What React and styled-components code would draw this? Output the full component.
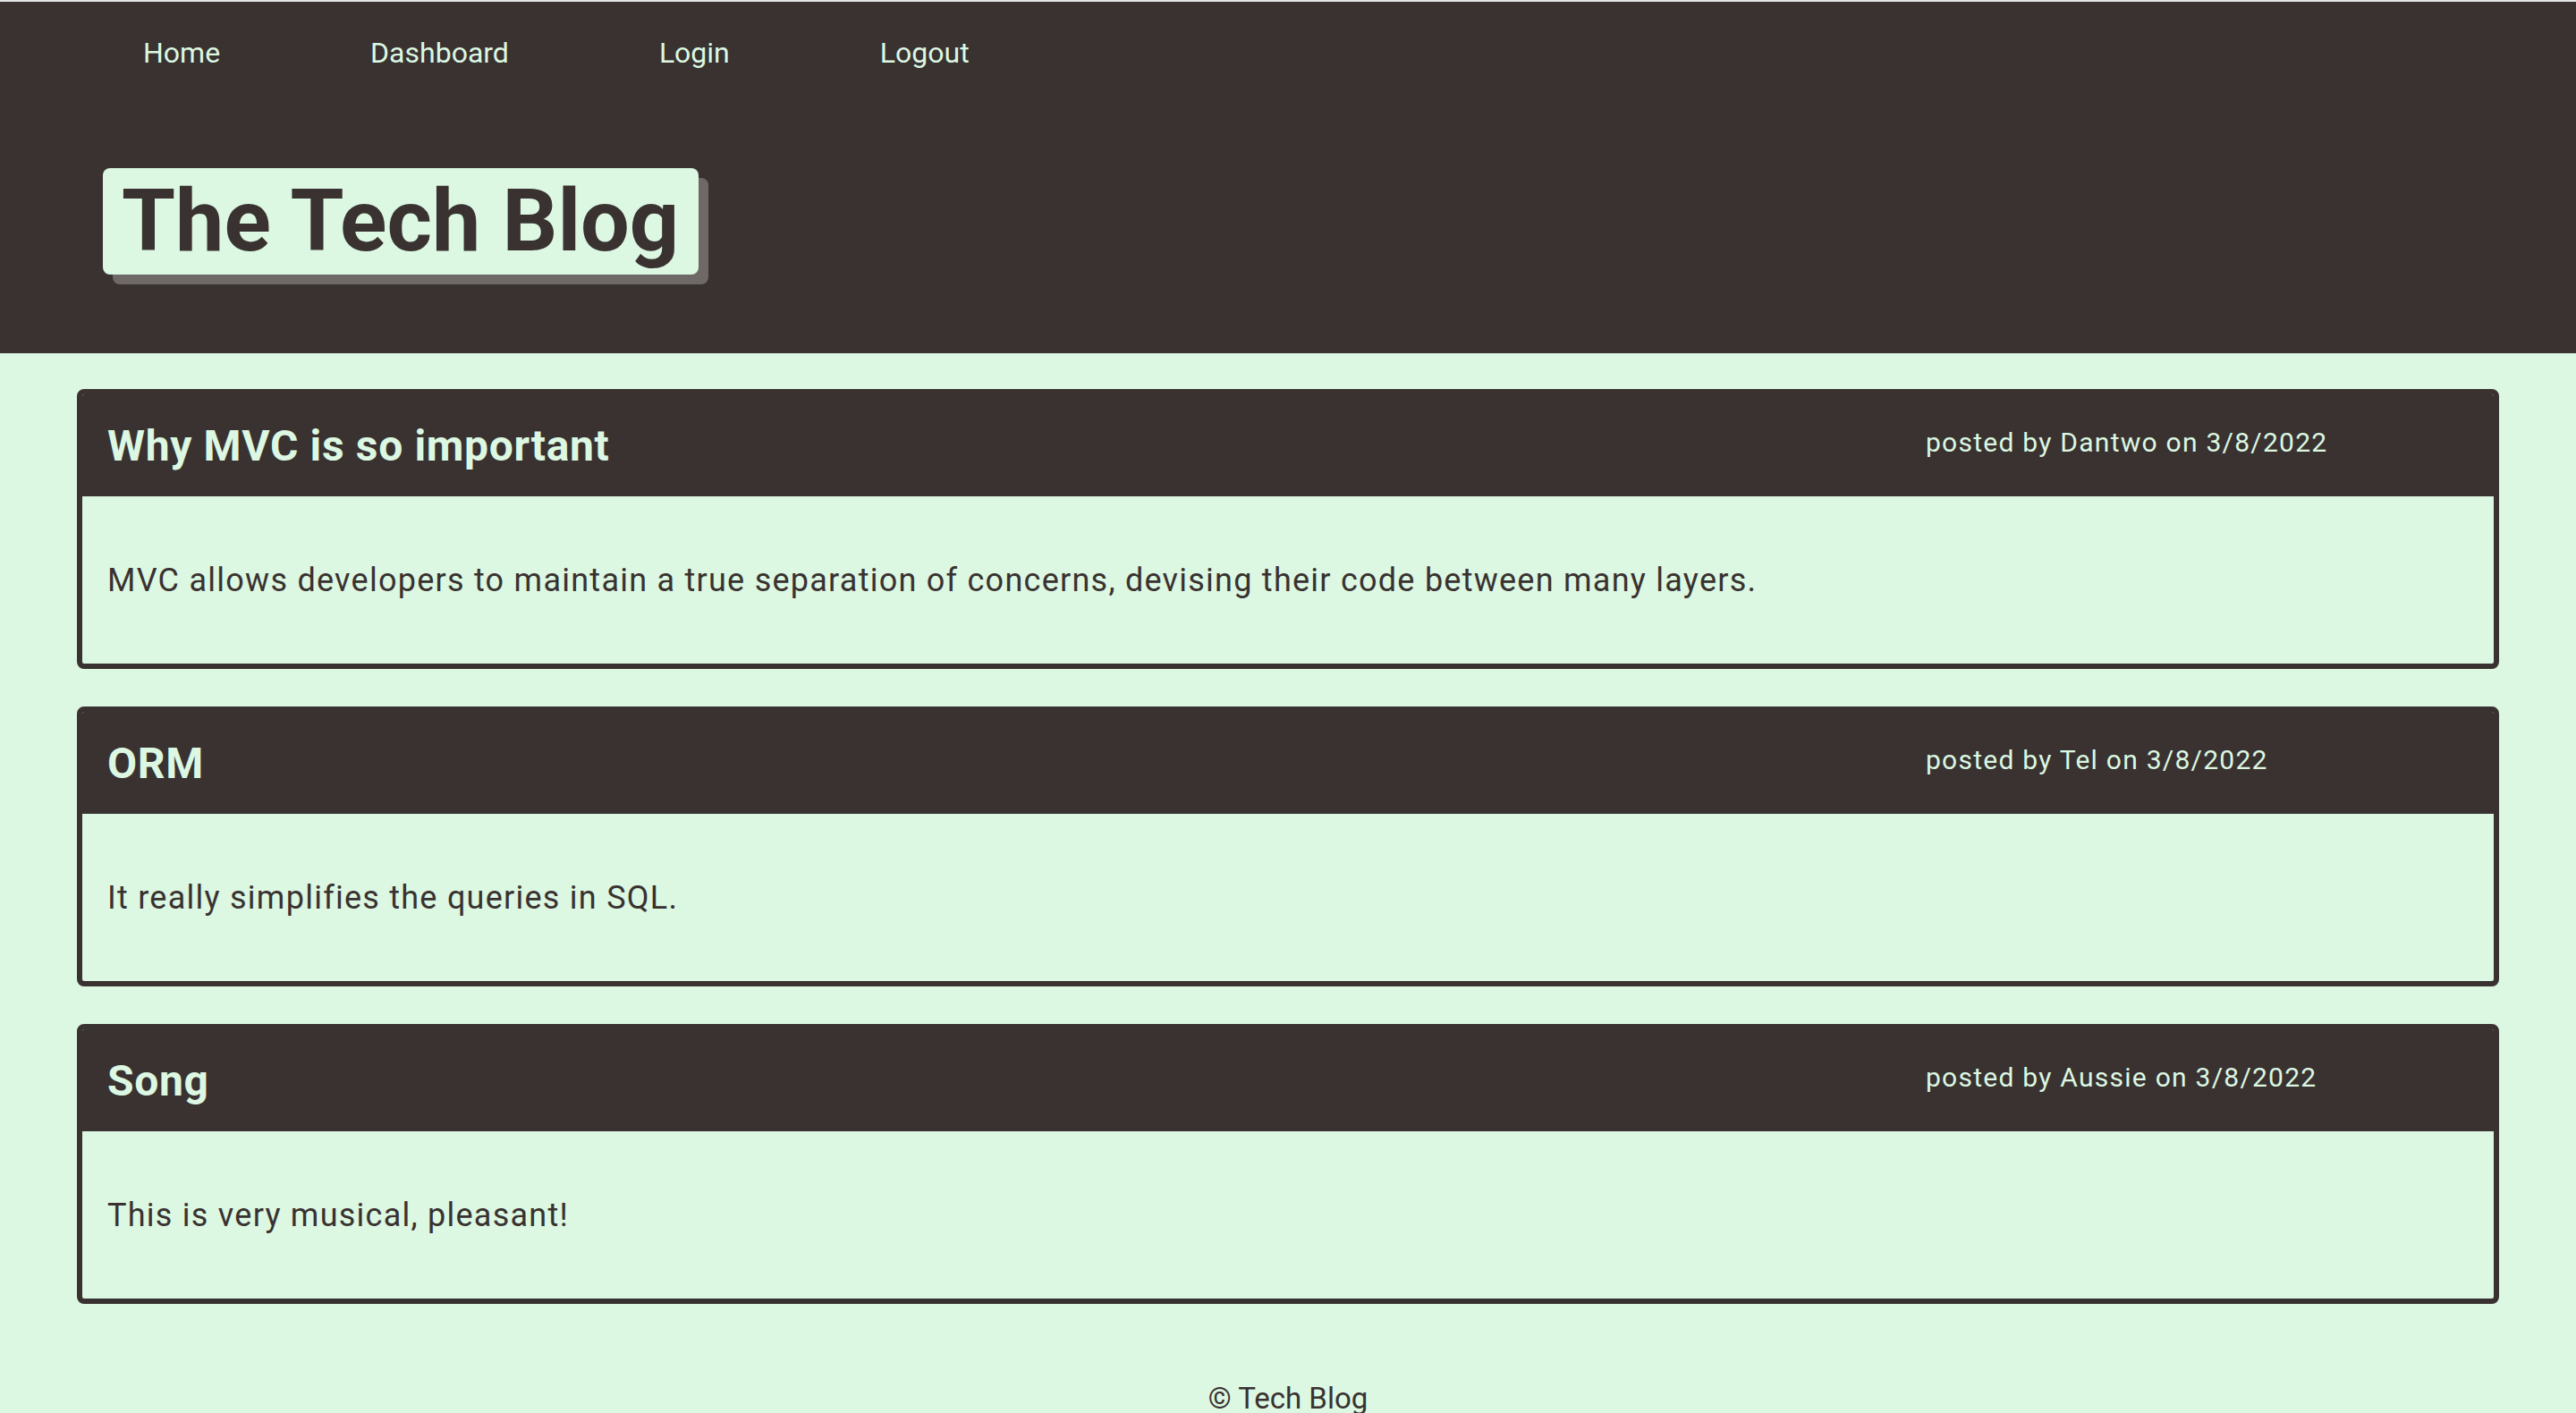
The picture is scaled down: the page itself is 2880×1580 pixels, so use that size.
import React from 'react'
import styled, { createGlobalStyle } from 'styled-components'

const posts = [
    { title: 'Why MVC is so important', author: 'Dantwo', date: '3/8/2022', body: 'MVC allows developers to maintain a true separation of concerns, devising their code between many layers.' },
    { title: 'ORM', author: 'Tel', date: '3/8/2022', body: 'It really simplifies the queries in SQL.' },
    { title: 'Song', author: 'Aussie', date: '3/8/2022', body: 'This is very musical, pleasant!' },
]

const App = () => {
    return (
        <>
            <GlobalStyle />
            <Header>
                <Nav>
                    <NavLink>Home</NavLink>
                    <NavLink>Dashboard</NavLink>
                    <NavLink>Login</NavLink>
                    <NavLink>Logout</NavLink>
                </Nav>
                <Brand>The Tech Blog</Brand>
            </Header>
            <Main>
                {posts.map(post => (
                    <Card key={post.title}>
                        <CardHeader>
                            <PostTitle>{post.title}</PostTitle>
                            <PostMeta>posted by {post.author} on {post.date}</PostMeta>
                        </CardHeader>
                        <CardBody>{post.body}</CardBody>
                    </Card>
                ))}
            </Main>
            <Footer>© Tech Blog</Footer>
        </>
    )
}

export default App

const GlobalStyle = createGlobalStyle`
    html, body {
        margin: 0;
        padding: 0;
        background: #dcf7e2;
        font-family: Roboto, "Noto Sans", sans-serif;
        color: #393230;
    }
`

const Header = styled.header`
    background: #393230;
    border-top: 2px solid #e4e4e4;
    padding: 37px 0 88px;
`

const Nav = styled.nav`
    display: flex;
    gap: 168px;
    padding-left: 160px;
`

const NavLink = styled.a`
    color: #dcf7e2;
    font-size: 32px;
    line-height: 40px;
    cursor: pointer;
`

const Brand = styled.h1`
    display: inline-block;
    margin: 109px 0 0 115px;
    padding: 0 22px 0 21px;
    height: 119px;
    line-height: 119px;
    font-size: 97px;
    font-weight: 700;
    background: #dcf7e2;
    color: #393230;
    border-radius: 8px;
    box-shadow: 11px 11px 0 #6e6866;
`

const Main = styled.main`
    display: flex;
    flex-direction: column;
    gap: 42px;
    padding: 40px 86px;
`

const Card = styled.article`
    border: 6px solid #393230;
    border-radius: 8px;
    overflow: hidden;
`

const CardHeader = styled.div`
    display: grid;
    grid-template-columns: 1fr 607px;
    align-items: center;
    height: 114px;
    padding: 0 28px;
    background: #393230;
    color: #dcf7e2;
`

const PostTitle = styled.h2`
    margin: 0;
    font-size: 48px;
    font-weight: 700;
    letter-spacing: 0.65px;
`

const PostMeta = styled.div`
    font-size: 30px;
    letter-spacing: 1.25px;
    margin-bottom: 8px;
`

const CardBody = styled.div`
    display: flex;
    align-items: center;
    height: 187px;
    padding: 0 28px;
    font-size: 36px;
    letter-spacing: 1.25px;
`

const Footer = styled.footer`
    text-align: center;
    font-size: 33px;
    line-height: 40px;
    padding-top: 46px;
`
